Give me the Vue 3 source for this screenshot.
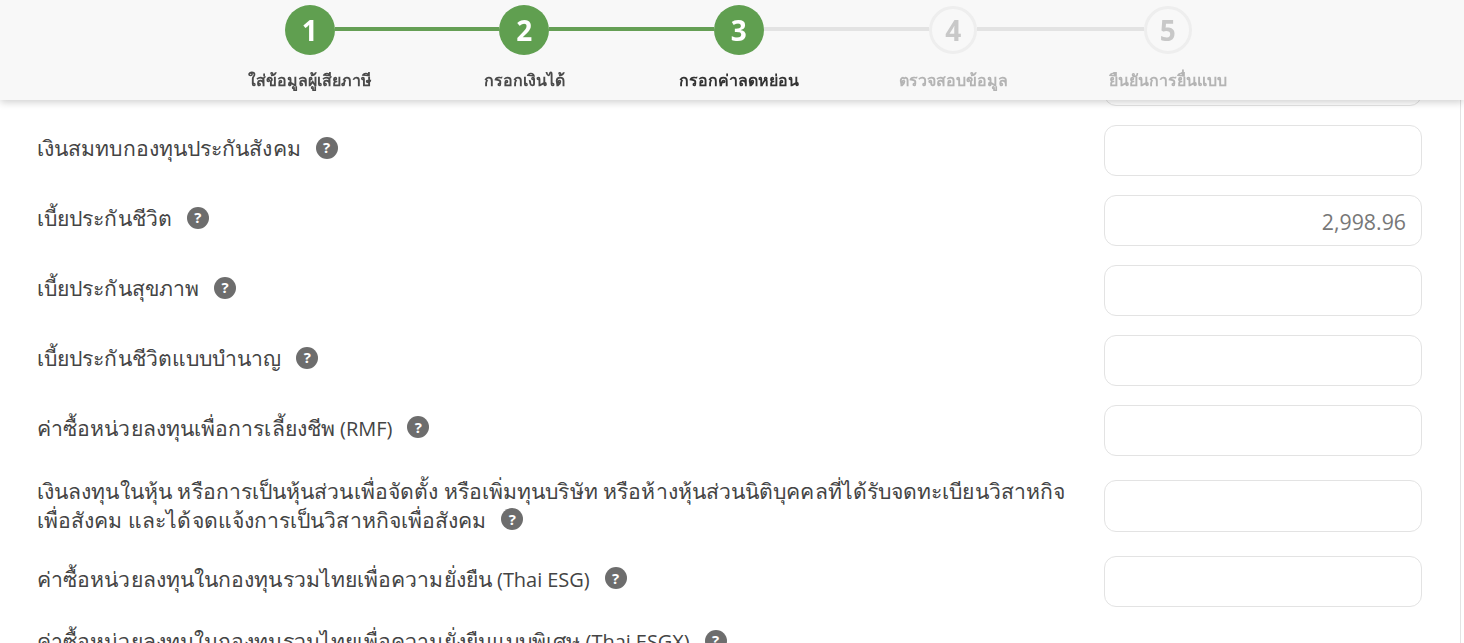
<script setup>
const steps = [
  { n: 1, label: 'ใส่ข้อมูลผู้เสียภาษี', done: true },
  { n: 2, label: 'กรอกเงินได้', done: true },
  { n: 3, label: 'กรอกค่าลดหย่อน', done: true, current: true },
  { n: 4, label: 'ตรวจสอบข้อมูล', done: false },
  { n: 5, label: 'ยืนยันการยื่นแบบ', done: false },
]
const rows = [
  { lines: ['เงินประกันสังคม'], help: false, value: '', input: true },
  { lines: ['เงินสมทบกองทุนประกันสังคม'], help: true, value: '', input: true },
  { lines: ['เบี้ยประกันชีวิต'], help: true, value: '2,998.96', input: true },
  { lines: ['เบี้ยประกันสุขภาพ'], help: true, value: '', input: true },
  { lines: ['เบี้ยประกันชีวิตแบบบำนาญ'], help: true, value: '', input: true },
  { lines: ['ค่าซื้อหน่วยลงทุนเพื่อการเลี้ยงชีพ'], latin: '(RMF)', help: true, value: '', input: true },
  { lines: ['เงินลงทุนในหุ้น หรือการเป็นหุ้นส่วนเพื่อจัดตั้ง หรือเพิ่มทุนบริษัท หรือห้างหุ้นส่วนนิติบุคคลที่ได้รับจดทะเบียนวิสาหกิจ', 'เพื่อสังคม และได้จดแจ้งการเป็นวิสาหกิจเพื่อสังคม'], help: true, value: '', input: true },
  { lines: ['ค่าซื้อหน่วยลงทุนในกองทุนรวมไทยเพื่อความยั่งยืน'], latin: '(Thai ESG)', help: true, value: '', input: true },
  { lines: ['ค่าซื้อหน่วยลงทุนในกองทุนรวมไทยเพื่อความยั่งยืนแบบพิเศษ'], latin: '(Thai ESGX)', help: true, value: '', input: false },
]
</script>

<template>
  <div class="page">
    <header class="head">
      <ol class="steps">
        <li v-for="(s, i) in steps" :key="s.n" class="step" :class="{ on: s.done, current: s.current }">
          <div class="track">
            <span class="bar" :class="{ hide: i === 0, lit: s.done }"></span>
            <span class="dot">{{ s.n }}</span>
            <span class="bar" :class="{ hide: i === 4, lit: s.done && steps[i + 1]?.done }"></span>
          </div>
          <span class="name">{{ s.label }}</span>
        </li>
      </ol>
    </header>
    <main class="form">
      <div v-for="(r, i) in rows" :key="i" class="row" :class="{ tall: r.lines.length > 1, bare: !r.input }">
        <div class="label">
          <template v-for="(l, k) in r.lines" :key="k"><br v-if="k > 0" />{{ l }}</template>
          <span v-if="r.latin" class="latin">{{ ' ' + r.latin }}</span>
          <span v-if="r.help" class="help">?</span>
        </div>
        <div v-if="r.input" class="field">{{ r.value }}</div>
      </div>
    </main>
  </div>
</template>

<style>
html, body { margin: 0; height: 643px; overflow: hidden; background: #fff; }
</style>

<style scoped>
.page {
  height: 643px;
  overflow: hidden;
  font-family: "Open Sans", "Noto Sans", "Liberation Sans", sans-serif;
}
.head {
  position: fixed;
  top: 0; left: 0; right: 0;
  height: 100px;
  background: #f8f8f8;
  box-shadow: 0 2px 8px rgba(0, 0, 0, .2);
  z-index: 5;
}
.steps {
  list-style: none;
  margin: 0;
  padding: 5px 0 0 202.5px;
  display: flex;
}
.step {
  width: 214.5px;
  display: flex;
  flex-direction: column;
  align-items: center;
}
.track {
  width: 100%;
  height: 50px;
  display: flex;
  align-items: center;
}
.bar { flex: 1; height: 4px; margin-bottom: 2px; background: #e3e3e3; }
.bar.lit { background: #659f55; }
.bar.hide { visibility: hidden; }
.dot {
  width: 42px; height: 42px;
  border: 3px solid #eee;
  border-radius: 50%;
  background: #f8f8f8;
  color: #c8c8c8;
  display: flex;
  align-items: center;
  justify-content: center;
  font-size: 28px;
  font-weight: 700;
}
.on .dot {
  width: 50px; height: 50px;
  border: 0;
  background: #609f50;
  color: #fff;
}
.name {
  margin-top: 12px;
  font-size: 16px;
  line-height: 26px;
  font-weight: 700;
  color: #b4b4b4;
  white-space: nowrap;
}
.on .name { color: #4a4a4a; }
.current .name { color: #333; }
.form {
  width: 1461px;
  box-sizing: border-box;
  border-right: 1px solid #e3e3e3;
  padding: 55px 38px 0 37px;
  display: flex;
  flex-direction: column;
  gap: 19px;
}
.row {
  display: flex;
  align-items: center;
  justify-content: space-between;
  min-height: 51px;
}
.row.tall { min-height: 62px; }
.row.bare { min-height: 29px; }
.label {
  margin-bottom: 6px;
  font-size: 21.15px;
  line-height: 29px;
  letter-spacing: .08px;
  color: #444;
  white-space: nowrap;
}
.tall .label { margin-bottom: 3px; }
.latin {
  font-size: 20px;
  letter-spacing: -.05px;
}
.help {
  display: inline-flex;
  align-items: center;
  justify-content: center;
  width: 22px; height: 22px;
  margin-left: 15px;
  border-radius: 50%;
  background: #6d6d6d;
  color: #fff;
  font-size: 15px;
  font-weight: 700;
  vertical-align: 3px;
}
.field {
  width: 318px;
  height: 51px;
  box-sizing: border-box;
  border: 1px solid #e3e3e3;
  border-radius: 12px;
  padding: 0 15px;
  font-size: 21.3px;
  line-height: 52px;
  color: #777;
  text-align: right;
}
.tall .field { height: 52px; }
</style>
